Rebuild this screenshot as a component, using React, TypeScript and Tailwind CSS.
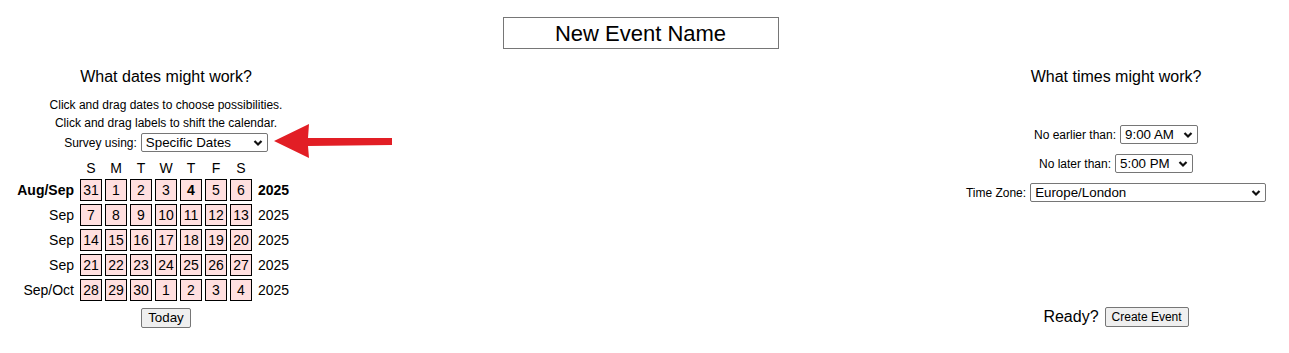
import type { ReactNode } from "react";

const days = ["S", "M", "T", "W", "T", "F", "S"];

const weeks = [
  { label: "Aug/Sep", bold: true, dates: ["31", "1", "2", "3", "4", "5", "6"] },
  { label: "Sep", bold: false, dates: ["7", "8", "9", "10", "11", "12", "13"] },
  { label: "Sep", bold: false, dates: ["14", "15", "16", "17", "18", "19", "20"] },
  { label: "Sep", bold: false, dates: ["21", "22", "23", "24", "25", "26", "27"] },
  { label: "Sep/Oct", bold: false, dates: ["28", "29", "30", "1", "2", "3", "4"] },
];

function Chevron() {
  return (
    <svg
      className="pointer-events-none absolute right-[5px] top-1/2 -translate-y-1/2"
      width="10"
      height="7"
      viewBox="0 0 10 7"
    >
      <path d="M1.5 1.5 L5 5 L8.5 1.5" fill="none" stroke="#111" strokeWidth="2.2" />
    </svg>
  );
}

function Select({ value, width }: { value: string; width: string }) {
  return (
    <div className={`relative ${width} h-[19px]`}>
      <select
        defaultValue={value}
        className="h-full w-full appearance-none rounded-[2px] border border-[#767676] bg-white pl-[4px] pr-[18px] text-[13.33px] leading-[17px] text-black"
      >
        <option>{value}</option>
      </select>
      <Chevron />
    </div>
  );
}

function Button({ children, small }: { children: ReactNode; small?: boolean }) {
  return (
    <button
      className={`h-[20px] rounded-[2px] border border-[#767676] bg-[#efefef] px-[6px] leading-[18px] text-black ${
        small ? "text-[12px]" : "text-[13.33px]"
      }`}
    >
      {children}
    </button>
  );
}

export default function App() {
  return (
    <div className="relative h-[353px] w-[1289px] overflow-hidden bg-white font-['Liberation_Sans',Arial,sans-serif] text-black">
      <div className="flex justify-center pr-[8px] pt-[17px]">
        <input
          defaultValue="New Event Name"
          className="h-[32px] w-[276px] border border-[#767676] bg-white text-center text-[22px] text-black"
        />
      </div>

      <div className="flex">
        {/* dates */}
        <div className="flex w-[332px] flex-col items-center">
          <div className="mt-[19px] text-[16px] leading-[18px]">What dates might work?</div>
          <div className="mt-[10px] text-center text-[12px] leading-[18px]">
            <div>Click and drag dates to choose possibilities.</div>
            <div>Click and drag labels to shift the calendar.</div>
          </div>
          <div className="mt-[1px] flex items-center gap-[4px] text-[12px]">
            <span>Survey using:</span>
            <Select value="Specific Dates" width="w-[127px]" />
          </div>

          <div className="mt-[8px] grid grid-cols-[60px_repeat(7,22px)_60px] gap-x-[3px] gap-y-[3px] text-[14px]">
            <div />
            {days.map((d, i) => (
              <div key={i} className="h-[16px] text-center leading-[16px]">
                {d}
              </div>
            ))}
            <div />
            {weeks.map((w, r) => (
              <div key={r} className="contents">
                <div
                  className={`flex h-[22px] items-center justify-end pr-[3px] ${w.bold ? "font-bold" : ""}`}
                >
                  {w.label}
                </div>
                {w.dates.map((d, c) => (
                  <div
                    key={c}
                    className={`flex h-[22px] items-center justify-center border border-black bg-[#ffdfdf] ${
                      r === 0 && c === 4 ? "font-bold" : ""
                    }`}
                  >
                    {d}
                  </div>
                ))}
                <div className={`flex h-[22px] items-center pl-[3px] ${w.bold ? "font-bold" : ""}`}>2025</div>
              </div>
            ))}
          </div>

          <div className="mt-[7px] flex">
            <Button>Today</Button>
          </div>
        </div>

        <div className="flex-1" />

        {/* times */}
        <div className="flex w-[346px] flex-col items-center">
          <div className="mt-[19px] text-[16px] leading-[18px]">What times might work?</div>
          <div className="mt-[39px] flex flex-col items-center gap-[10px] text-[12px]">
            <div className="flex items-center gap-[4px]">
              <span>No earlier than:</span>
              <Select value="9:00 AM" width="w-[78px]" />
            </div>
            <div className="flex items-center gap-[4px]">
              <span>No later than:</span>
              <Select value="5:00 PM" width="w-[78px]" />
            </div>
            <div className="flex items-center gap-[4px]">
              <span>Time Zone:</span>
              <Select value="Europe/London" width="w-[236px]" />
            </div>
          </div>
          <div className="mt-[105px] flex items-center gap-[6px]">
            <span className="text-[16px] leading-[20px]">Ready?</span>
            <Button small>Create Event</Button>
          </div>
        </div>
      </div>

      {/* annotation arrow */}
      <svg className="absolute left-[272px] top-[123px]" width="122" height="36" viewBox="0 0 122 36">
        <polygon points="2,18 37,1 36,15 120,15 120,22 36,23 37,35" fill="#e21e25" />
      </svg>
    </div>
  );
}
